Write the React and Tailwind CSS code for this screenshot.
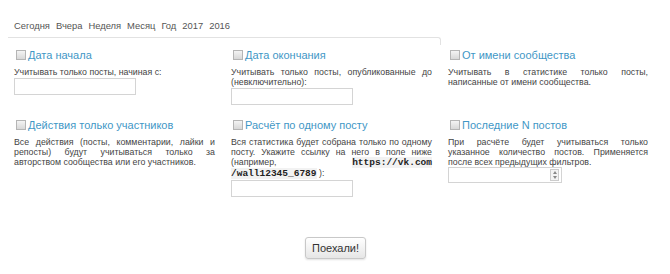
import React from "react";

function Cb() {
  return (
    <span className="inline-block w-[10px] h-[10px] border border-[#b5b5b5] bg-gradient-to-b from-[#f4f4f4] to-[#d8d8d8] mr-[2px] shrink-0" />
  );
}

function Title({ children }) {
  return (
    <div className="flex items-center h-[14px] ml-[2px] text-[11px] text-[#3f97c6] leading-none">
      <Cb />
      <span>{children}</span>
    </div>
  );
}

function Desc({ children }) {
  return (
    <div className="mt-[5px] text-[8.8px] leading-[10px] text-[#444] text-justify">{children}</div>
  );
}

function Input({ w = "w-[122px]" }) {
  return <div className={`${w} h-[17px] border border-[#d4d4d4] bg-white mt-[1px]`} />;
}

export default function App() {
  return (
    <div className="w-[670px] h-[274px] bg-white relative overflow-hidden" style={{ fontFamily: '"Liberation Sans", Arial, sans-serif' }}>
      <div className="h-[20px]" />
      <div className="flex gap-[6px] pl-[14px] text-[9.4px] text-[#555] leading-[12px]">
        <span>Сегодня</span><span>Вчера</span><span>Неделя</span><span>Месяц</span><span>Год</span><span>2017</span><span>2016</span>
      </div>
      <div className="ml-[8px] mt-[5px] w-[433px] h-[8px] border-t border-r border-[#e2e2e2] rounded-tr-[3px]" />
      <div className="grid grid-cols-[217px_217px_200px] pl-[14px] mt-[3px]">
        <div className="pr-[16px]">
          <Title>Дата начала</Title>
          <Desc>Учитывать только посты, начиная с:</Desc>
          <Input />
        </div>
        <div className="pr-[16px]">
          <Title>Дата окончания</Title>
          <Desc>Учитывать только посты, опубликованные до (невключительно):</Desc>
          <Input />
        </div>
        <div>
          <Title>От имени сообщества</Title>
          <Desc>Учитывать в статистике только посты, написанные от имени сообщества.</Desc>
        </div>

        <div className="pr-[16px] mt-[13px]">
          <Title>Действия только участников</Title>
          <Desc>Все действия (посты, комментарии, лайки и репосты) будут учитываться только за авторством сообщества или его участников.</Desc>
        </div>
        <div className="pr-[16px] mt-[13px]">
          <Title>Расчёт по одному посту</Title>
          <Desc>
            Вся статистика будет собрана только по одному посту. Укажите ссылку на него в поле ниже (например,{" "}
            <code className="bg-[#f2f2f2] text-[#222] font-bold text-[9.5px] leading-[10px]" style={{ fontFamily: '"Liberation Mono", monospace' }}>https://vk.com /wall12345_6789</code> ):
          </Desc>
          <Input />
        </div>
        <div className="mt-[13px]">
          <Title>Последние N постов</Title>
          <Desc>При расчёте будет учитываться только указанное количество постов. Применяется после всех предыдущих фильтров.</Desc>
          <div className="w-[114px] h-[16px] border border-[#d4d4d4] bg-white flex justify-end items-center pr-[2px]">
            <div className="w-[9px] h-[12px] border border-[#ccc] bg-[#f3f3f3] flex flex-col items-center justify-center gap-[2px]">
              <span className="w-0 h-0 border-l-[2px] border-r-[2px] border-b-[3px] border-l-transparent border-r-transparent border-b-[#888]" />
              <span className="w-0 h-0 border-l-[2px] border-r-[2px] border-t-[3px] border-l-transparent border-r-transparent border-t-[#888]" />
            </div>
          </div>
        </div>
      </div>
      <div className="absolute left-[305px] top-[237px] w-[61px] h-[22px] border border-[#c8c8c8] rounded-[3px] bg-gradient-to-b from-[#ffffff] to-[#e6e6e6] shadow-[0_1px_2px_rgba(0,0,0,0.12)] flex items-center justify-center text-[11px] text-[#333]">
        Поехали!
      </div>
    </div>
  );
}
